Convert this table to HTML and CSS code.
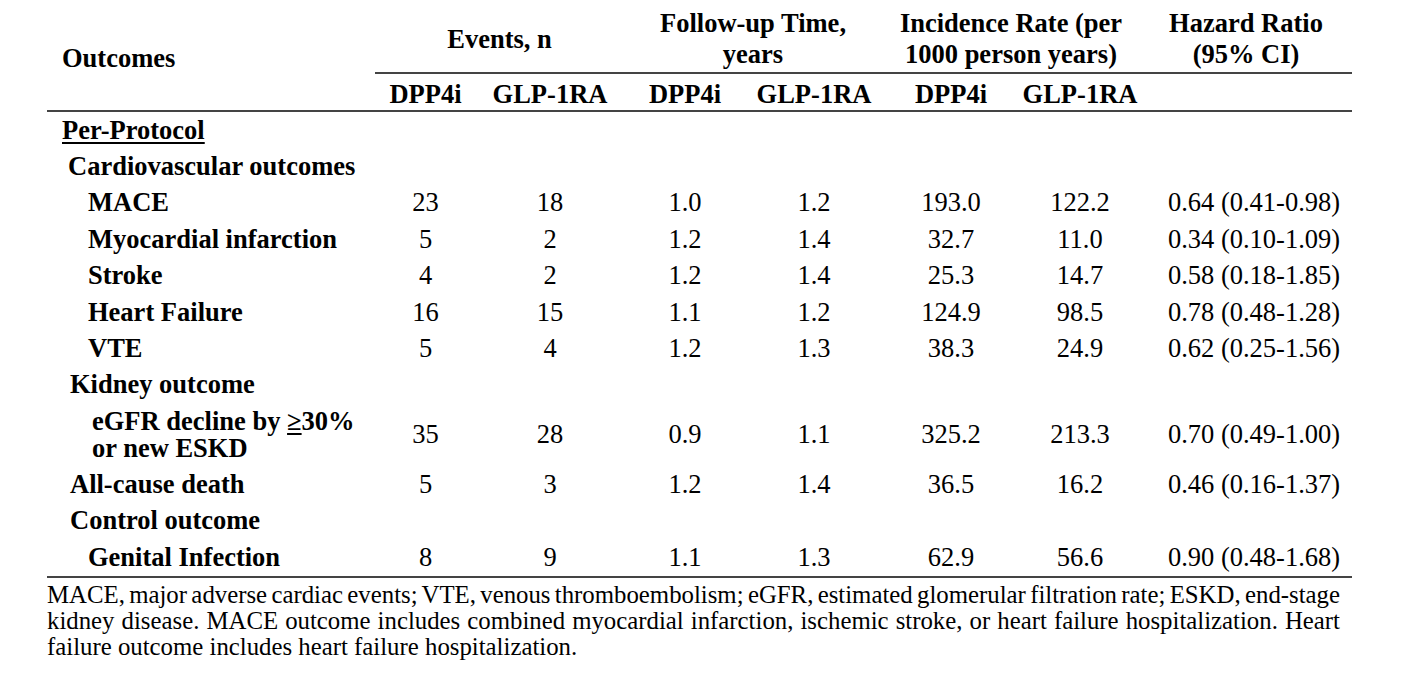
FILE: index.html
```html
<!DOCTYPE html>
<html lang="en">
<head>
<meta charset="utf-8">
<title>Outcomes table</title>
<link rel="stylesheet" href="styles.css">
</head>
<body>
<div class="page">
  <table class="results">
    <colgroup>
      <col class="c-label">
      <col class="c-ev1">
      <col class="c-ev2">
      <col class="c-fu1">
      <col class="c-fu2">
      <col class="c-ir1">
      <col class="c-ir2">
      <col class="c-hr">
    </colgroup>
    <thead>
      <tr class="group-row">
        <th rowspan="2" class="outcomes-head">Outcomes</th>
        <th colspan="2" class="group">Events, n</th>
        <th colspan="2" class="group">Follow-up Time,<br>years</th>
        <th colspan="2" class="group">Incidence Rate (per<br>1000 person years)</th>
        <th class="group">Hazard Ratio<br>(95% CI)</th>
      </tr>
      <tr class="sub-row">
        <th>DPP4i</th>
        <th>GLP-1RA</th>
        <th>DPP4i</th>
        <th>GLP-1RA</th>
        <th>DPP4i</th>
        <th>GLP-1RA</th>
        <th></th>
      </tr>
    </thead>
    <tbody>
      <tr>
        <td class="label lv0"><span class="underlined">Per-Protocol</span></td>
        <td></td><td></td><td></td><td></td><td></td><td></td><td></td>
      </tr>
      <tr>
        <td class="label lv1">Cardiovascular outcomes</td>
        <td></td><td></td><td></td><td></td><td></td><td></td><td></td>
      </tr>
      <tr>
        <td class="label lv2">MACE</td>
        <td>23</td><td>18</td><td>1.0</td><td>1.2</td><td>193.0</td><td>122.2</td><td class="hr">0.64 (0.41-0.98)</td>
      </tr>
      <tr>
        <td class="label lv2">Myocardial infarction</td>
        <td>5</td><td>2</td><td>1.2</td><td>1.4</td><td>32.7</td><td>11.0</td><td class="hr">0.34 (0.10-1.09)</td>
      </tr>
      <tr>
        <td class="label lv2">Stroke</td>
        <td>4</td><td>2</td><td>1.2</td><td>1.4</td><td>25.3</td><td>14.7</td><td class="hr">0.58 (0.18-1.85)</td>
      </tr>
      <tr>
        <td class="label lv2">Heart Failure</td>
        <td>16</td><td>15</td><td>1.1</td><td>1.2</td><td>124.9</td><td>98.5</td><td class="hr">0.78 (0.48-1.28)</td>
      </tr>
      <tr>
        <td class="label lv2">VTE</td>
        <td>5</td><td>4</td><td>1.2</td><td>1.3</td><td>38.3</td><td>24.9</td><td class="hr">0.62 (0.25-1.56)</td>
      </tr>
      <tr>
        <td class="label lv1b">Kidney outcome</td>
        <td></td><td></td><td></td><td></td><td></td><td></td><td></td>
      </tr>
      <tr>
        <td class="label lv2b">eGFR decline by <span class="underlined">&ge;</span>30%<br>or new ESKD</td>
        <td>35</td><td>28</td><td>0.9</td><td>1.1</td><td>325.2</td><td>213.3</td><td class="hr">0.70 (0.49-1.00)</td>
      </tr>
      <tr>
        <td class="label lv1b">All-cause death</td>
        <td>5</td><td>3</td><td>1.2</td><td>1.4</td><td>36.5</td><td>16.2</td><td class="hr">0.46 (0.16-1.37)</td>
      </tr>
      <tr>
        <td class="label lv1b">Control outcome</td>
        <td></td><td></td><td></td><td></td><td></td><td></td><td></td>
      </tr>
      <tr class="last-row">
        <td class="label lv2">Genital Infection</td>
        <td>8</td><td>9</td><td>1.1</td><td>1.3</td><td>62.9</td><td>56.6</td><td class="hr">0.90 (0.48-1.68)</td>
      </tr>
    </tbody>
  </table>
  <p class="note">
    <span class="note-line">MACE, major adverse cardiac events; VTE, venous thromboembolism; eGFR, estimated glomerular filtration rate; ESKD, end-stage</span>
    <span class="note-line">kidney disease. MACE outcome includes combined myocardial infarction, ischemic stroke, or heart failure hospitalization. Heart</span>
    <span class="note-last">failure outcome includes heart failure hospitalization.</span>
  </p>
</div>
</body>
</html>
```

FILE: styles.css
```css
html, body {
  margin: 0;
  padding: 0;
  background: #ffffff;
}

body {
  font-family: "Liberation Serif", "Times New Roman", serif;
  color: #000000;
}

.page {
  padding: 6px 0 0 47px;
}

.results {
  width: 1305px;
  table-layout: fixed;
  border-collapse: collapse;
  font-size: 26.5px;
}

.c-label { width: 328px; }
.c-ev1 { width: 101px; }
.c-ev2 { width: 148px; }
.c-fu1 { width: 122px; }
.c-fu2 { width: 136px; }
.c-ir1 { width: 138px; }
.c-ir2 { width: 120px; }
.c-hr { width: 212px; }

.results th {
  font-weight: bold;
  text-align: center;
  padding: 0;
}

.group-row th {
  line-height: 31px;
  padding: 2px 0 2px 0;
  vertical-align: middle;
  border-bottom: 2px solid #444444;
}

.results th.outcomes-head {
  text-align: left;
  padding-left: 15px;
  vertical-align: middle;
  border-bottom: 2px solid #444444;
}

.sub-row th {
  line-height: 27px;
  padding: 7px 0 2px 0;
  border-bottom: 2px solid #444444;
}

.results td {
  line-height: 27px;
  padding: 4.7px 0;
  text-align: center;
  vertical-align: middle;
  white-space: nowrap;
}

.results td.label {
  text-align: left;
  font-weight: bold;
}

.results td.hr {
  padding-left: 16px;
}

.lv0 { padding-left: 15px !important; }
.lv1 { padding-left: 21px !important; }
.lv1b { padding-left: 23px !important; }
.lv2 { padding-left: 41px !important; }
.lv2b { padding-left: 45px !important; }

.underlined {
  text-decoration: underline;
  text-decoration-thickness: 2px;
  text-underline-offset: 3px;
}

.last-row td {
  border-bottom: 2px solid #444444;
}

.note {
  width: 1293px;
  margin: 4px 0 0 0;
  font-size: 24.8px;
  line-height: 26px;
}

.note-line {
  display: block;
  text-align: justify;
  text-align-last: justify;
  word-spacing: -5px;
}

.note-last {
  display: block;
  text-align: left;
}
```
